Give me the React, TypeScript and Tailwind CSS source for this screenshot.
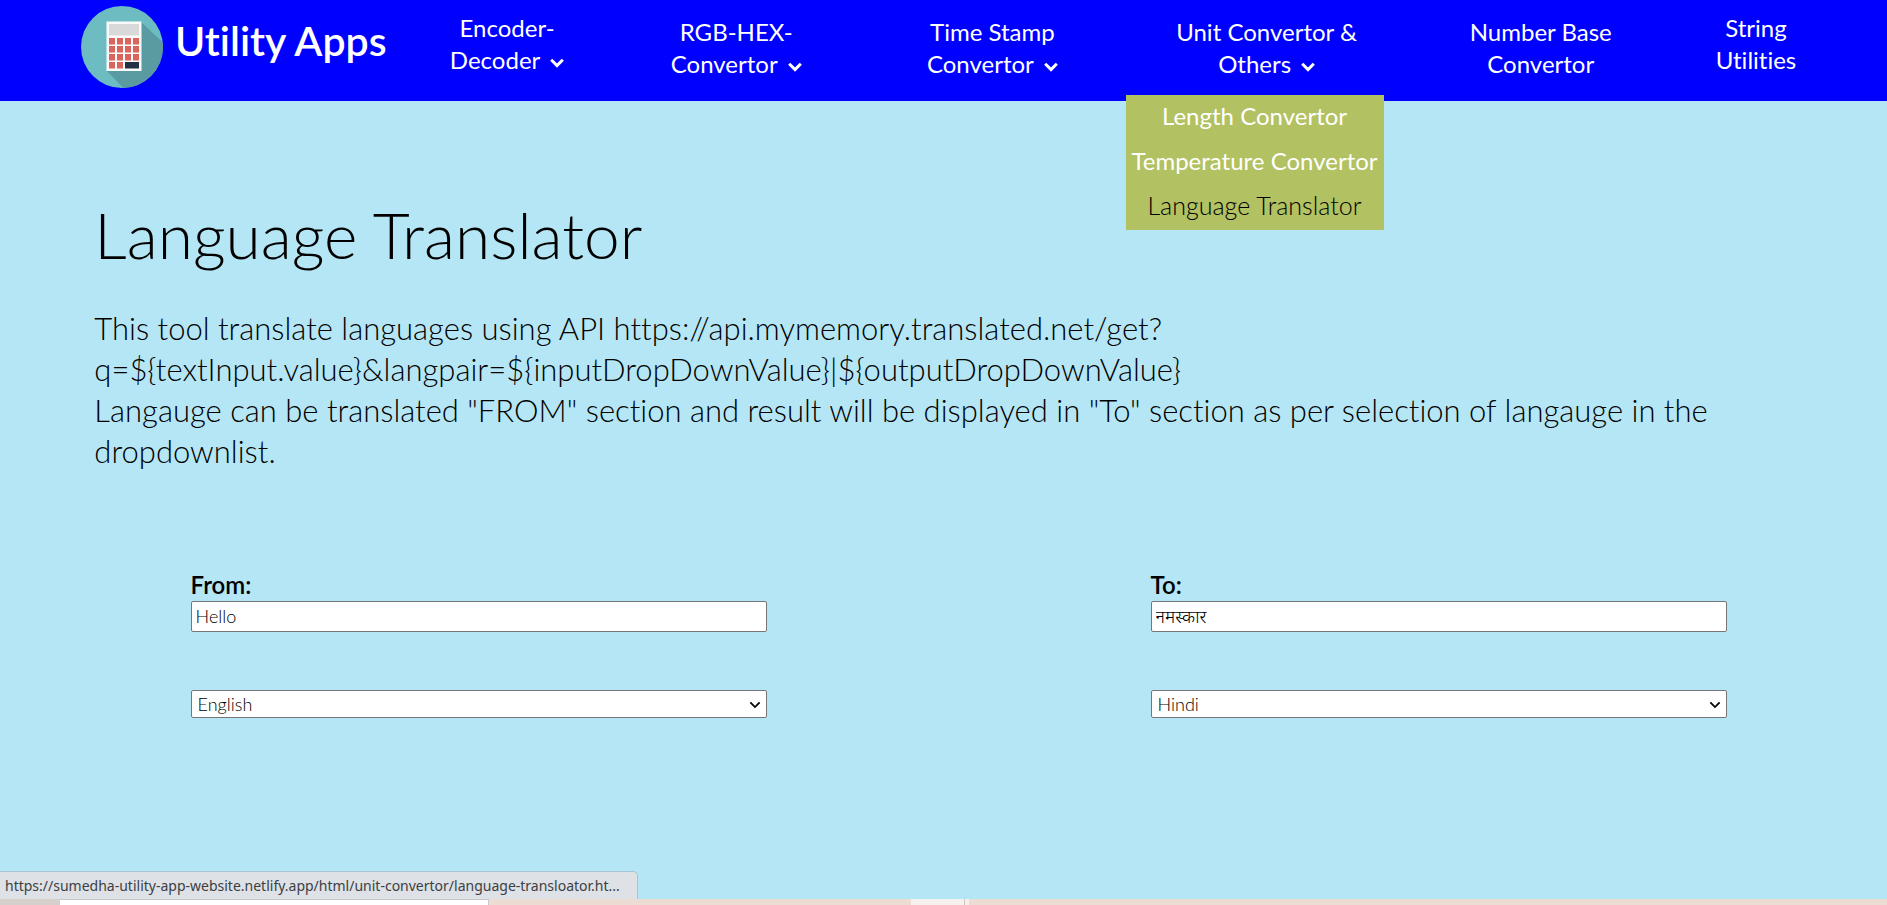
import React, { useState } from "react";

type NavItem = { lines: [string, string]; arrow: boolean; className: string };

const navItems: NavItem[] = [
  { lines: ["Encoder-", "Decoder"], arrow: true, className: "pt-3" },
  { lines: ["RGB-HEX-", "Convertor"], arrow: true, className: "pt-4" },
  { lines: ["Time Stamp", "Convertor"], arrow: true, className: "pt-4" },
  { lines: ["Unit Convertor &", "Others"], arrow: true, className: "pt-4" },
  { lines: ["Number Base", "Convertor"], arrow: false, className: "pt-4" },
  { lines: ["String", "Utilities"], arrow: false, className: "pt-3" },
];

const menuItems = ["Length Convertor", "Temperature Convertor", "Language Translator"];

function Logo() {
  const rows = [0, 1, 2, 3];
  return (
    <svg viewBox="0 0 82 82" className="size-[82px] shrink-0" aria-hidden="true">
      <defs>
        <clipPath id="disc">
          <circle cx="41" cy="41" r="41" />
        </clipPath>
      </defs>
      <circle cx="41" cy="41" r="41" fill="#6cbcc2" />
      <path d="M60 16 L90 44 V90 H50 L26 65 Z" fill="#5a9ba2" clipPath="url(#disc)" />
      <rect x="25.500" y="15.500" width="35" height="49.500" fill="#fbfafa" />
      <rect x="28" y="18" width="30" height="11.500" fill="#d9d9da" />
      {rows.map((r) =>
        rows.map((c) =>
          r === 3 && c > 1 ? null : (
            <rect key={`${r}-${c}`} x={28 + c * 8} y={32 + r * 8} width="6" height="6.500" fill="#d9655c" />
          ),
        ),
      )}
      <rect x="44" y="56" width="14" height="6.500" fill="#232f42" />
    </svg>
  );
}

function Chevron({ className }: { className: string }) {
  return (
    <svg viewBox="0 0 14 10" className={className} fill="none" stroke="currentColor" aria-hidden="true">
      <path d="M1.200 1.800 L7 7.600 L12.800 1.800" />
    </svg>
  );
}

function Nav() {
  return (
    <header className="flex h-[101px] items-start bg-[#0000ff] pl-[81px] text-white">
      <a href="#home" className="flex w-[320px] shrink-0 items-center gap-3 pt-[6px]">
        <Logo />
        <span className="-mt-3 text-[41px] leading-[52px] font-semibold whitespace-nowrap">Utility Apps</span>
      </a>
      <nav className="grid grow grid-cols-[212fr_246fr_266fr_282fr_266fr_164fr] pr-[49px] text-[24px] leading-8 font-normal">
        {navItems.map((item) => (
          <div key={item.lines[0]} className={`relative flex justify-center ${item.className}`}>
            <a href="#nav" className="text-center whitespace-nowrap">
              {item.lines[0]}
              <br />
              {item.lines[1]}
              {item.arrow && <Chevron className="ml-[10px] inline h-[10px] w-[14px] stroke-[3]" />}
            </a>
            {item.lines[1] === "Others" && (
              <ul className="absolute top-[95px] left-0 z-10 bg-[#b2c161] px-[6px] text-center leading-[33px] whitespace-nowrap">
                {menuItems.map((label) => (
                  <li key={label}>
                    <a
                      href="#tool"
                      className={`block pt-1 pb-2 ${label === "Language Translator" ? "text-[25px] font-light text-black" : "text-white"}`}
                    >
                      {label}
                    </a>
                  </li>
                ))}
              </ul>
            )}
          </div>
        ))}
      </nav>
    </header>
  );
}

type FieldProps = {
  id: string;
  label: string;
  initial: string;
  language: string;
};

function Field({ id, label, initial, language }: FieldProps) {
  const [text, setText] = useState(initial);
  const [lang, setLang] = useState(language);
  return (
    <div className="flex flex-col">
      <label htmlFor={id} className="text-[24px] leading-8 font-semibold">
        {label}
      </label>
      <input
        id={id}
        type="text"
        value={text}
        onChange={(e) => setText(e.target.value)}
        className="h-[31px] rounded-[2px] border border-[#767676] bg-white px-1 pb-[2px] text-[18px]"
      />
      <div className="relative mt-[58px]">
        <select
          aria-label={`${label} language`}
          value={lang}
          onChange={(e) => setLang(e.target.value)}
          className="block h-[28px] w-full appearance-none rounded-[2px] border border-[#767676] bg-white px-[6px] text-[18px] leading-6"
        >
          <option>English</option>
          <option>Hindi</option>
        </select>
        <Chevron className="pointer-events-none absolute top-[11px] right-[6px] h-[8px] w-[12px] stroke-[2.2]" />
      </div>
    </div>
  );
}

export default function App() {
  return (
    <div className="flex min-h-screen flex-col bg-[#b5e6f5] font-['Lato','Noto_Sans',sans-serif] font-light text-black [font-variant-ligatures:none]">
      <Nav />
      <main className="grow">
        <section className="px-[5%] pt-[92px]">
          <h1 className="text-[64px] leading-[84px]">Language Translator</h1>
          <p className="mt-[31px] text-[31px] leading-[41px] wrap-anywhere">
            This tool translate languages using API https://api.mymemory.translated.net/get?
            <br />
            {"q=${textInput.value}&langpair=${inputDropDownValue}|${outputDropDownValue}"}
            <br />
            Langauge can be translated "FROM" section and result will be displayed in "To" section as per selection of
            langauge in the dropdownlist.
          </p>
        </section>
        <form className="mt-[97px] grid grid-cols-2 gap-x-[25%] pr-[8.5%] pl-[10.1%]">
          <Field id="from" label="From:" initial="Hello" language="English" />
          <Field id="to" label="To:" initial="नमस्कार" language="Hindi" />
        </form>
      </main>
      <div className="flex h-7 w-[638px] items-center rounded-tr-[5px] border-t border-r border-[#a9c4d2] bg-[#dee1e6] pl-[5px] font-['Noto_Sans',sans-serif] text-[14px] font-normal whitespace-nowrap text-[#3c4043]">
        https://sumedha-utility-app-website.netlify.app/html/unit-convertor/language-transloator.ht...
      </div>
      <div className="flex h-[6px] bg-[#ebddd4]">
        <div className="w-[60px] bg-[#d6d0cd]" />
        <div className="w-[429px] border-t border-r border-[#c8c8cc] bg-white" />
        <div className="ml-[422px] w-[54px] border-r border-[#cfc4be] bg-[#f7f1ee]" />
        <div className="w-[4px] bg-[#f7efea]" />
      </div>
    </div>
  );
}
